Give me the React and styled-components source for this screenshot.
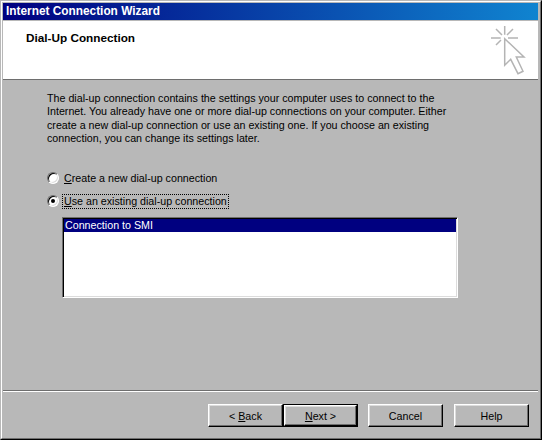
import React from "react";
import styled, { createGlobalStyle } from "styled-components";

const Global = createGlobalStyle`
  html, body { margin: 0; padding: 0; background: #b8b8b8; }
  * { box-sizing: border-box; }
`;

const Window = styled.div`
  width: 542px; height: 440px; overflow: hidden;
  display: flex; flex-direction: column;
  background: #b8b8b8;
  border-top: 1px solid #b8b8b8;
  border-left: 1px solid #b8b8b8;
  border-right: 1px solid #000;
  border-bottom: 1px solid #000;
  font-family: "Liberation Sans", Arial, sans-serif;
  font-size: 10.7px;
  color: #000;
`;
const Frame = styled.div`
  flex: 1; display: flex; flex-direction: column;
  border-top: 1px solid #fff;
  border-left: 1px solid #fff;
  border-right: 1px solid #6e6e6e;
  border-bottom: 1px solid #6e6e6e;
  padding: 1px 1px 0 1px;
`;
const TitleBar = styled.div`
  height: 17px; flex: none; margin-right: 1px;
  background: linear-gradient(90deg, #000080, #1084d0);
  color: #fff; font-weight: 700; font-size: 11.85px;
  line-height: 16px; padding-left: 3px;
`;
const Header = styled.div`
  height: 59px; flex: none; background: #fff;
  margin: 1px 1px 0 0;
  border-bottom: 1px solid #6e6e6e;
  padding: 10px 0 0 23px;
  position: relative;
`;
const Heading = styled.div`
  font-weight: 700; font-size: 11.75px; line-height: 14px;
`;
const Burst = styled.svg`
  position: absolute; right: 10px; top: 1px;
`;
const Body = styled.div`
  flex: 1; padding: 12px 0 0 44px; display: flex; flex-direction: column;
`;
const Intro = styled.p`
  margin: 0; height: 53px; line-height: 13.3px; white-space: pre-line;
`;
const RadioRow = styled.label`
  display: flex; align-items: center; height: 16px;
  margin-top: ${p => p.$top}px;
`;
const RadioCircle = styled.span`
  width: 12px; height: 12px; border-radius: 50%; flex: none;
  background: #fff;
  border: 1px solid; border-color: #6e6e6e #fff #fff #6e6e6e;
  box-shadow: inset 1px 1px 0 #000, inset -1px -1px 0 #dcdcdc;
  display: flex; align-items: center; justify-content: center;
  margin-right: 4px;
`;
const RadioDot = styled.span`
  width: 4px; height: 4px; border-radius: 50%; background: #000;
`;
const RadioLabel = styled.span`
  padding: 0 1px; line-height: 13px;
  outline: ${p => (p.$focused ? "1px dotted #000" : "none")};
`;
const Key = styled.span`text-decoration: underline;`;
const ListBox = styled.div`
  margin: 8px 0 0 15px;
  width: 396px; height: 81px;
  background: #fff;
  border: 1px solid; border-color: #6e6e6e #fff #fff #6e6e6e;
  box-shadow: inset 1px 1px 0 #000, inset -1px -1px 0 #dcdcdc;
  padding: 1px;
`;
const ListItem = styled.div`
  height: 13px; line-height: 13px; padding-left: 1px;
  background: #000080; color: #fff;
`;
const Separator = styled.div`
  height: 2px; flex: none; margin-right: 1px;
  border-top: 1px solid #6e6e6e; border-bottom: 1px solid #fff;
`;
const Footer = styled.div`
  height: 46px; flex: none;
  display: flex; align-items: flex-start;
  padding: 12px 0 0 205px;
`;
const Button = styled.div`
  width: 75px; height: 23px; flex: none;
  display: flex; align-items: center; justify-content: center;
  background: #b8b8b8;
  margin-left: ${p => p.$gap || 0}px;
  border: ${p => (p.$def ? "1px solid #000" : "none")};
  position: relative;
`;
const ButtonFace = styled.div`
  position: absolute; inset: 0;
  border: 1px solid; border-color: #fff #000 #000 #fff;
  box-shadow: inset -1px -1px 0 #6e6e6e, inset 1px 1px 0 #dcdcdc;
`;
const ButtonText = styled.span`position: relative;`;

function WizBtn({ gap, def, children }) {
  return (
    <Button $gap={gap} $def={def}>
      <ButtonFace />
      <ButtonText>{children}</ButtonText>
    </Button>
  );
}

export default function App() {
  return (
    <>
      <Global />
      <Window>
        <Frame>
          <TitleBar>Internet Connection Wizard</TitleBar>
          <Header>
            <Heading>Dial-Up Connection</Heading>
            <Burst width="40" height="56" viewBox="0 0 40 56" fill="none" stroke="#b4b4b4" strokeWidth="1.5">
              <path d="M3 16H12.700M16.700 4V12.700M8 7L14 13M25 7L19 13M8 23L13 18M20 16H30" />
              <path d="M16.700 16.700V43.300L22.700 37.300L30 51.700L35 49.300L28.300 35H36Z" />
            </Burst>
          </Header>
          <Body>
            <Intro>{"The dial-up connection contains the settings your computer uses to connect to the\nInternet. You already have one or more dial-up connections on your computer. Either\ncreate a new dial-up connection or use an existing one. If you choose an existing\nconnection, you can change its settings later."}</Intro>
            <RadioRow $top={25}>
              <RadioCircle />
              <RadioLabel><Key>C</Key>reate a new dial-up connection</RadioLabel>
            </RadioRow>
            <RadioRow $top={7}>
              <RadioCircle><RadioDot /></RadioCircle>
              <RadioLabel $focused><Key>U</Key>se an existing dial-up connection</RadioLabel>
            </RadioRow>
            <ListBox>
              <ListItem>Connection to SMI</ListItem>
            </ListBox>
          </Body>
          <Separator />
          <Footer>
            <WizBtn>&lt; <Key>B</Key>ack</WizBtn>
            <WizBtn def><Key>N</Key>ext &gt;</WizBtn>
            <WizBtn gap={10}>Cancel</WizBtn>
            <WizBtn gap={11}>Help</WizBtn>
          </Footer>
        </Frame>
      </Window>
    </>
  );
}
